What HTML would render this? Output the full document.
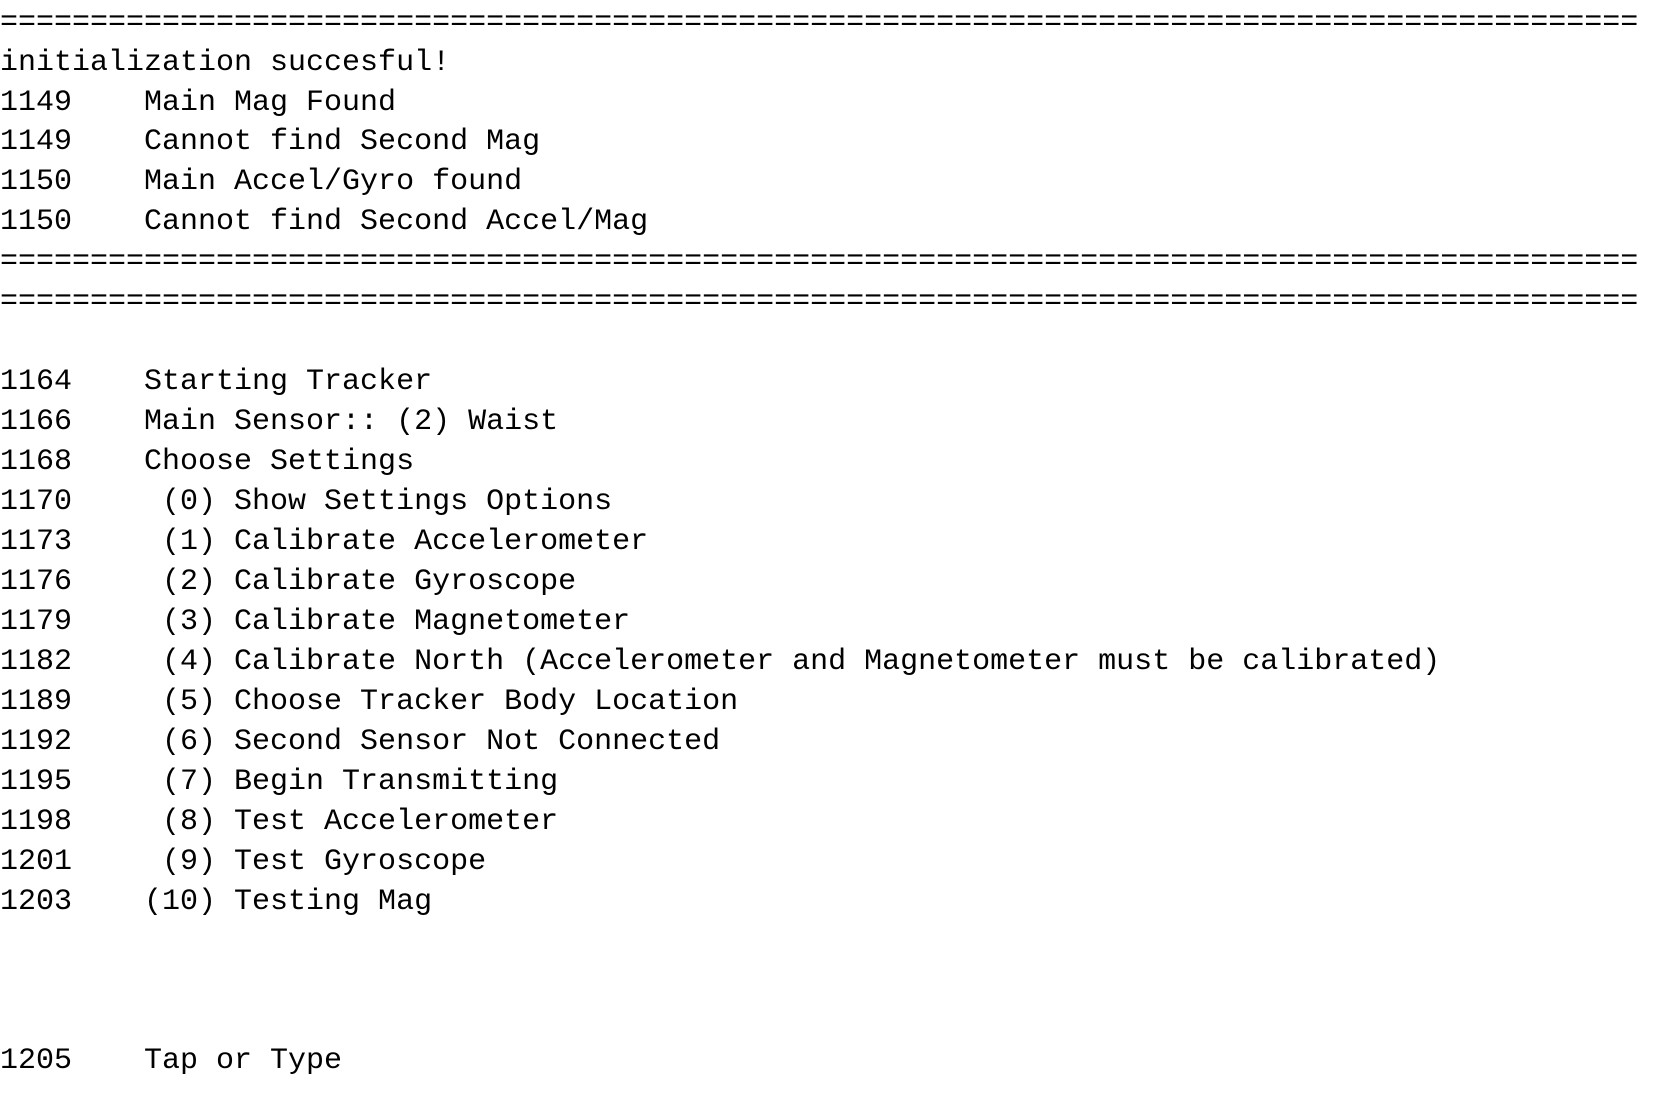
<!DOCTYPE html>
<html><head><meta charset="utf-8"><style>
html,body{margin:0;padding:0;background:#fff;width:1666px;height:1103px;overflow:hidden}
pre{margin:0;padding:3.6px 0 0 0;font-family:"Liberation Mono",monospace;font-size:30px;line-height:39.95px;color:#000;white-space:pre}
</style></head><body><pre>===========================================================================================
initialization succesful!
1149    Main Mag Found
1149    Cannot find Second Mag
1150    Main Accel/Gyro found
1150    Cannot find Second Accel/Mag
===========================================================================================
===========================================================================================

1164    Starting Tracker
1166    Main Sensor:: (2) Waist
1168    Choose Settings
1170     (0) Show Settings Options
1173     (1) Calibrate Accelerometer
1176     (2) Calibrate Gyroscope
1179     (3) Calibrate Magnetometer
1182     (4) Calibrate North (Accelerometer and Magnetometer must be calibrated)
1189     (5) Choose Tracker Body Location
1192     (6) Second Sensor Not Connected
1195     (7) Begin Transmitting
1198     (8) Test Accelerometer
1201     (9) Test Gyroscope
1203    (10) Testing Mag



1205    Tap or Type
</pre></body></html>
